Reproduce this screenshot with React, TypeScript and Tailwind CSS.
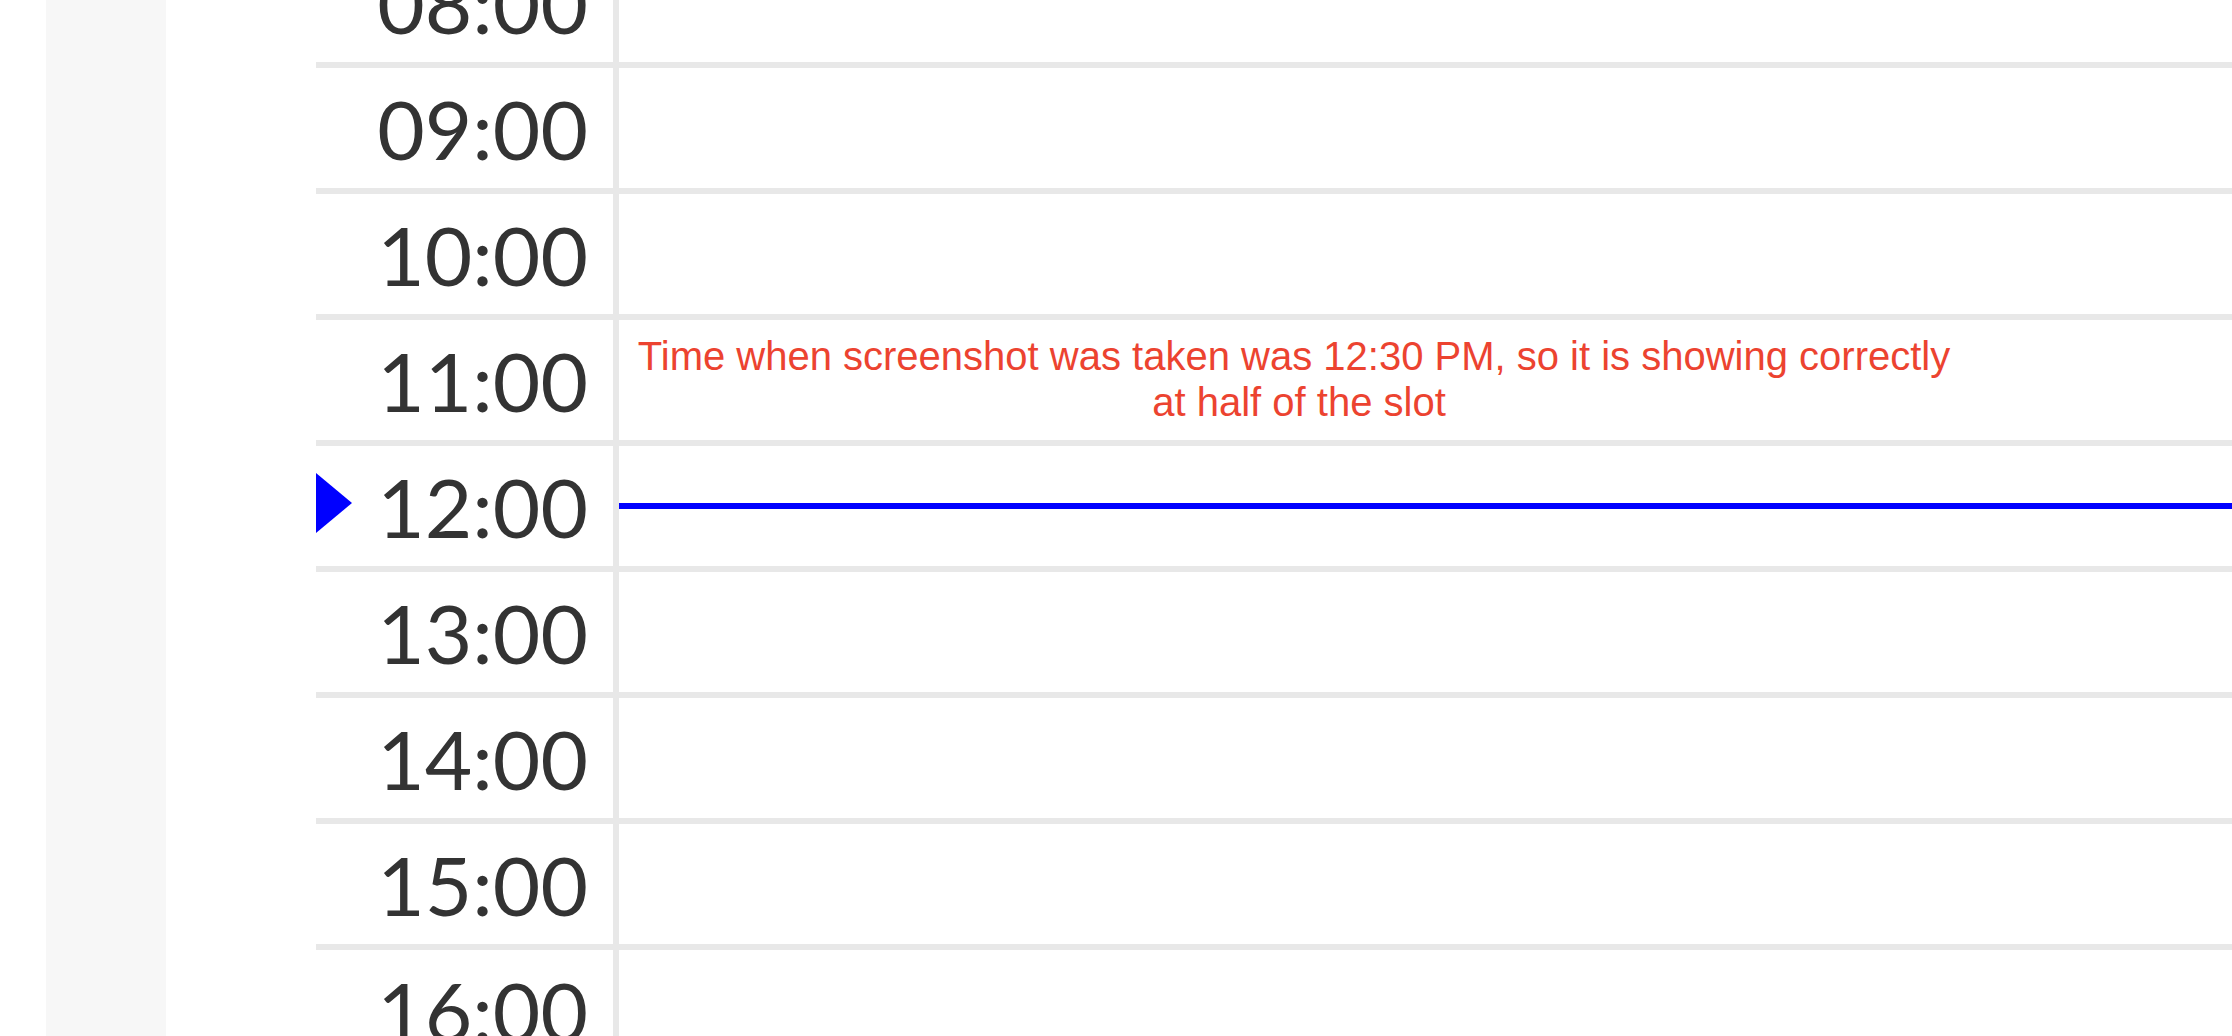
import React from "react";

const hours = ["08:00", "09:00", "10:00", "11:00", "12:00", "13:00", "14:00", "15:00", "16:00"];

function Row({ label }: { label: string }) {
  const isNow = label === "12:00";
  const isNote = label === "11:00";
  return (
    <div className="relative flex h-[126px] border-b-[6px] border-[#e8e8e8]">
      <div className="flex h-[120px] w-[303px] shrink-0 items-center justify-end border-r-[6px] border-[#e8e8e8] pr-[25px] font-['Lato',sans-serif] text-[82px] leading-[120px] text-[#333333]">
        {label}
      </div>
      <div className="h-[120px] flex-1">
        {isNote && (
          <div className="pl-[15px] pt-[13px] font-['Liberation_Sans',Arial,sans-serif] text-[40px] leading-[46px] text-[#ec4330]">
            <div className="w-[1320px] text-center">
              Time when screenshot was taken was 12:30 PM, so it is showing correctly
            </div>
            <div className="w-[1320px] pl-[10px] text-center">at half of the slot</div>
          </div>
        )}
      </div>
      {isNow && (
        <>
          <svg className="absolute left-0 top-[27px]" width="36" height="60" viewBox="0 0 36 60">
            <polygon points="0,0 36,30 0,60" fill="#0000ff" />
          </svg>
          <div className="absolute left-[303px] right-0 top-[57px] h-[6px] bg-[#0000ff]" />
        </>
      )}
    </div>
  );
}

export default function App() {
  return (
    <div className="flex h-[1036px] w-[2232px] overflow-hidden bg-white">
      <div className="w-[46px] shrink-0" />
      <div className="w-[120px] shrink-0 bg-[#f7f7f7]" />
      <div className="w-[150px] shrink-0" />
      <div className="-mt-[58px] flex-1">
        {hours.map((h) => (
          <Row key={h} label={h} />
        ))}
      </div>
    </div>
  );
}
